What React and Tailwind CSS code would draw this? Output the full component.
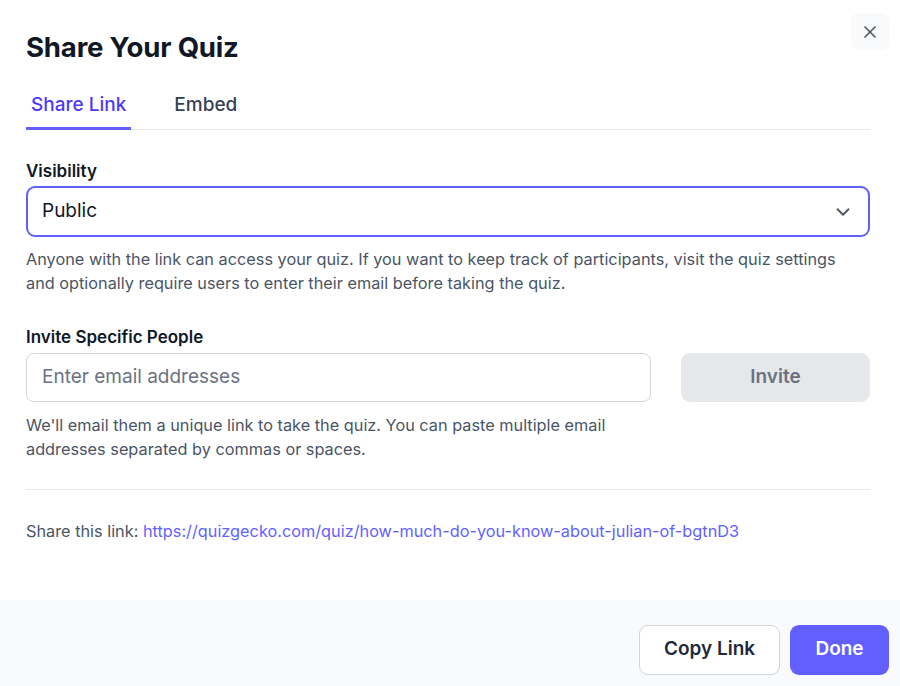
import { X, ChevronDown } from 'lucide-react'

export default function App() {
  return (
    <div className="relative w-[900px] h-[686px] bg-white flex flex-col font-['Inter','Noto_Sans',sans-serif] overflow-hidden">
      <button className="absolute right-[11px] top-[13px] w-[38px] h-[37px] rounded-lg bg-gray-50 flex items-center justify-center text-gray-600">
        <X className="w-[20px] h-[20px]" strokeWidth={2} />
      </button>

      <div className="flex-1 pl-[26px] pr-[30px]">
        <h1 className="mt-[30px] text-[27.6px] leading-[34px] font-bold text-gray-900 tracking-[-0.2px]">Share Your Quiz</h1>

        <div className="mt-[28px] flex border-b border-gray-200">
          <div className="px-[5px] pb-[9px] text-[19px] leading-[26px] font-medium text-indigo-600 border-b-[3px] border-indigo-500 -mb-px">
            Share Link
          </div>
          <div className="ml-[38px] px-[5px] pb-[9px] text-[19px] leading-[26px] font-medium text-gray-700">Embed</div>
        </div>

        <label className="block mt-[29px] text-[17px] leading-[24px] font-semibold text-gray-900">Visibility</label>
        <div className="mt-[3px] h-[51px] rounded-[9px] border-2 border-indigo-500 flex items-center justify-between pl-[14px] pr-[14px]">
          <span className="text-[19px] text-gray-900">Public</span>
          <ChevronDown className="w-[22px] h-[22px] text-gray-600" strokeWidth={2} />
        </div>
        <p className="mt-[10px] max-w-[830px] text-[16.3px] leading-[24px] text-gray-600">
          Anyone with the link can access your quiz. If you want to keep track of participants, visit the quiz settings and optionally require users to enter their email before taking the quiz.
        </p>

        <label className="block mt-[30px] text-[17px] leading-[24px] font-semibold text-gray-900">Invite Specific People</label>
        <div className="mt-[4px] flex gap-[30px]">
          <div className="flex-1 h-[49px] rounded-[8px] border border-gray-300 flex items-center pl-[15px] text-[19px] text-gray-500">
            Enter email addresses
          </div>
          <button className="w-[189px] h-[49px] rounded-[9px] bg-gray-200 text-[19px] font-semibold text-gray-500">Invite</button>
        </div>
        <p className="mt-[11px] w-[610px] text-[16.3px] leading-[24px] text-gray-600">
          We'll email them a unique link to take the quiz. You can paste multiple email addresses separated by commas or spaces.
        </p>

        <div className="mt-[28px] border-t border-gray-200" />

        <p className="mt-[29px] text-[16.3px] leading-[24px] text-gray-600">
          Share this link:{' '}
          <a className="text-indigo-500">https://quizgecko.com/quiz/how-much-do-you-know-about-julian-of-bgtnD3</a>
        </p>
      </div>

      <div className="h-[86px] bg-gray-50 flex items-center justify-end gap-[10px] pr-[11px] pt-[13px]">
        <button className="w-[141px] h-[50px] rounded-[9px] bg-white border border-gray-300 text-[19px] font-semibold text-gray-800">Copy Link</button>
        <button className="w-[99px] h-[50px] rounded-[9px] bg-indigo-500 text-[19px] font-semibold text-white">Done</button>
      </div>
    </div>
  )
}
